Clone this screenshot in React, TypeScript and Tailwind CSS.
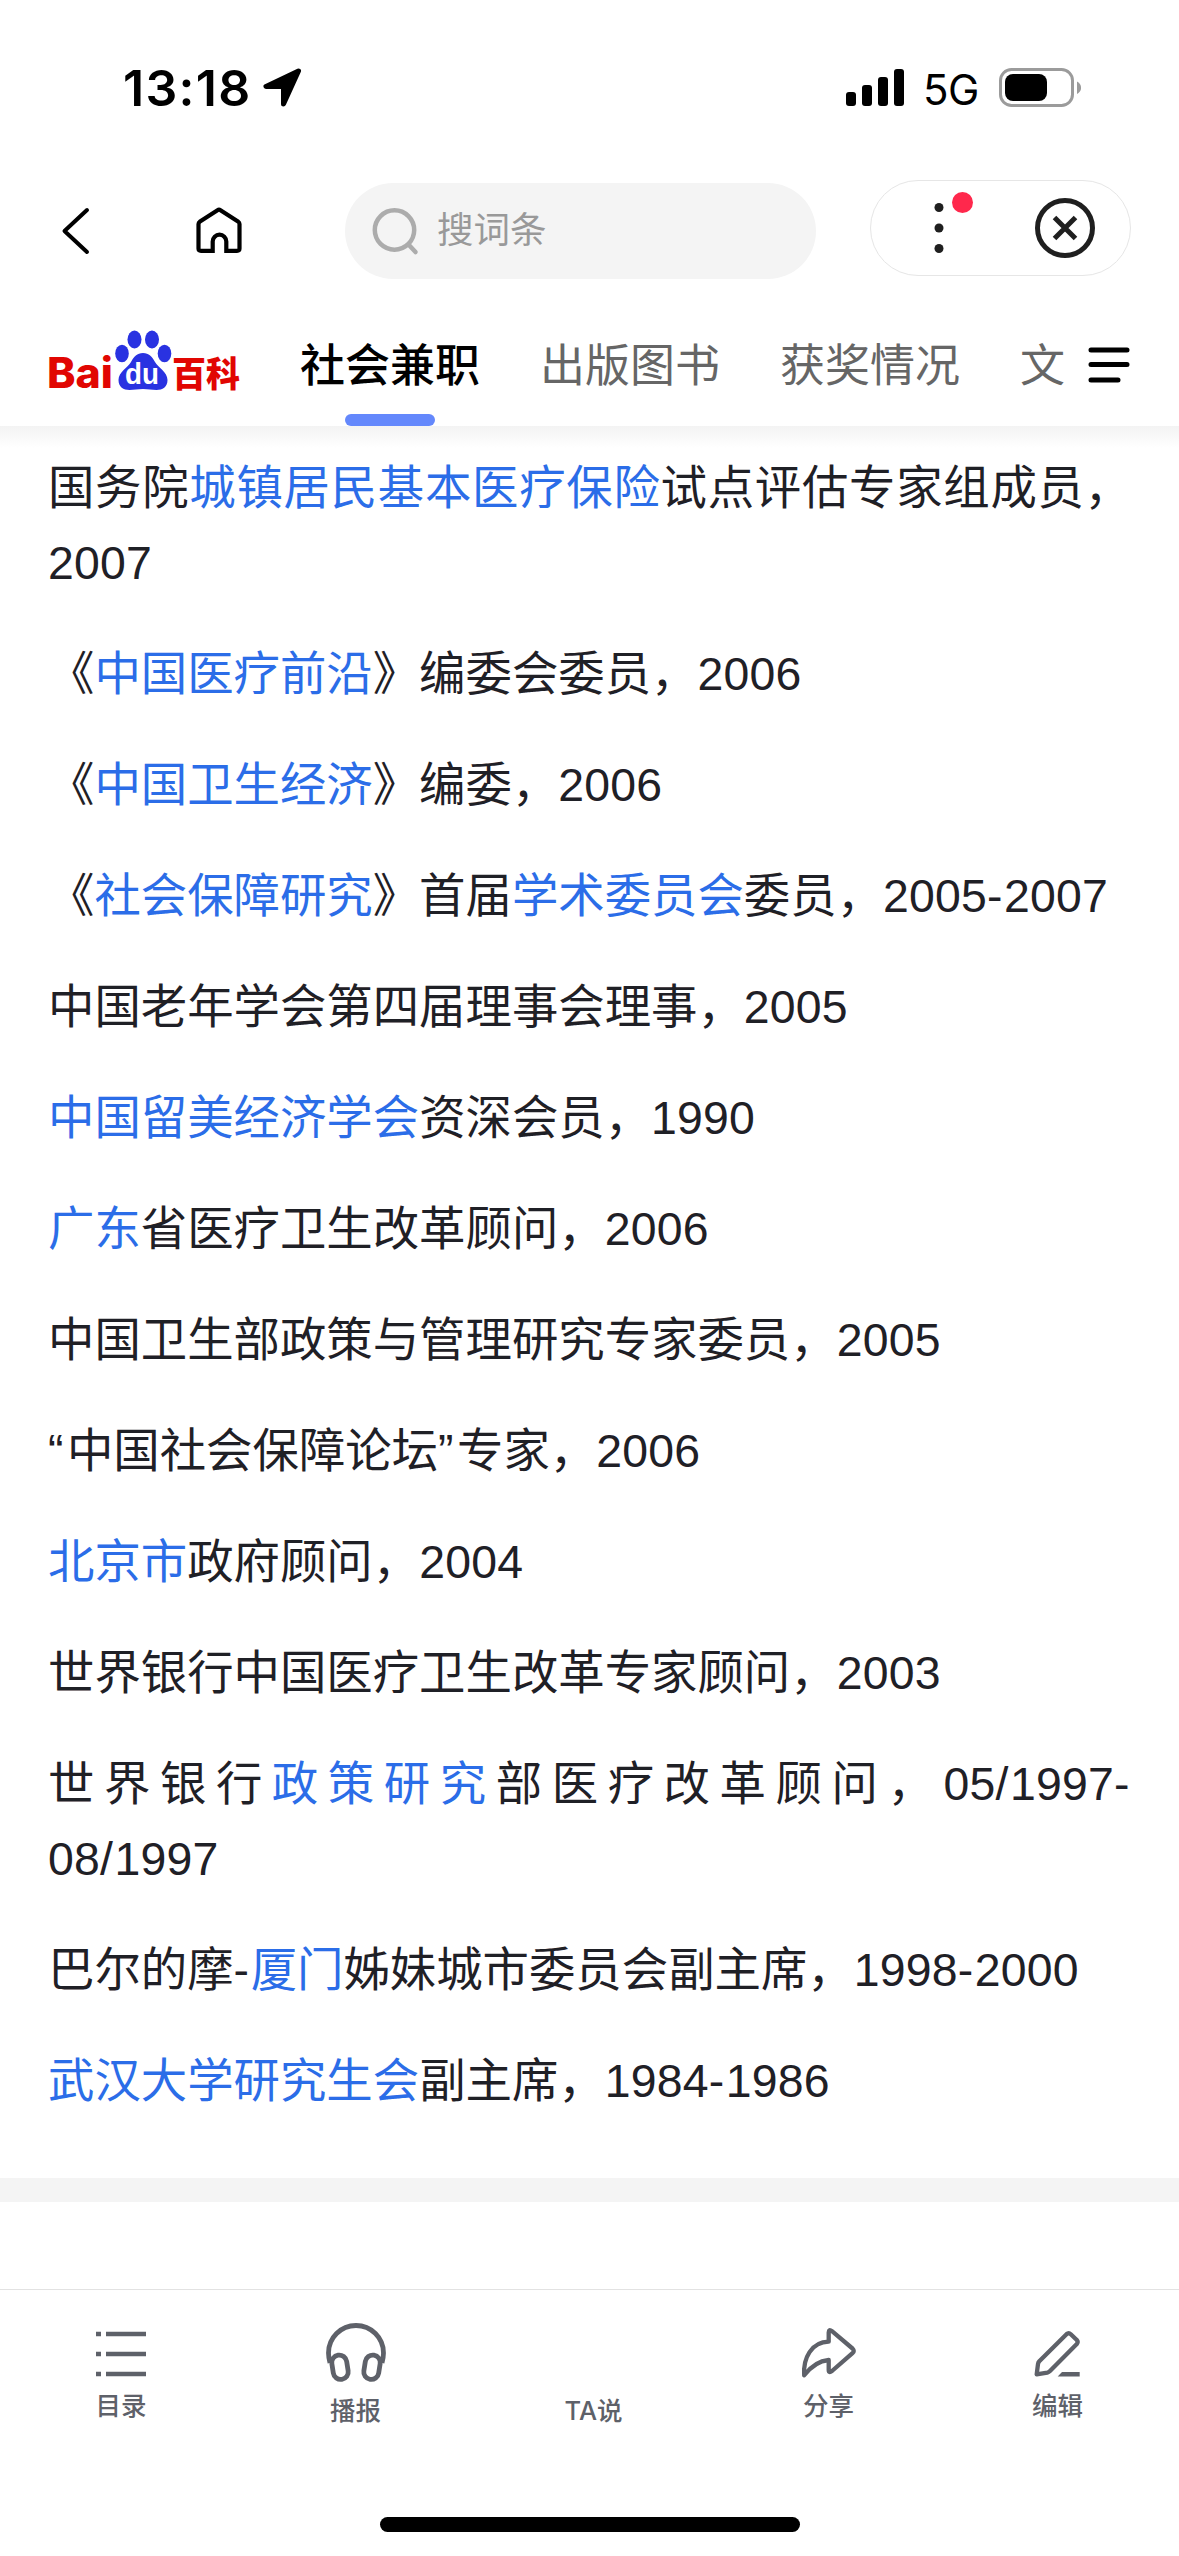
import type { ReactNode } from "react";

type Part = string | { link: string };

const entries: Part[][] = [
  ["国务院", { link: "城镇居民基本医疗保险" }, "试点评估专家组成员，2007"],
  ["《", { link: "中国医疗前沿" }, "》编委会委员，2006"],
  ["《", { link: "中国卫生经济" }, "》编委，2006"],
  ["《", { link: "社会保障研究" }, "》首届", { link: "学术委员会" }, "委员，2005-2007"],
  ["中国老年学会第四届理事会理事，2005"],
  [{ link: "中国留美经济学会" }, "资深会员，1990"],
  [{ link: "广东" }, "省医疗卫生改革顾问，2006"],
  ["中国卫生部政策与管理研究专家委员，2005"],
  ["“中国社会保障论坛”专家，2006"],
  [{ link: "北京市" }, "政府顾问，2004"],
  ["世界银行中国医疗卫生改革专家顾问，2003"],
  ["世界银行", { link: "政策研究" }, "部医疗改革顾问，05/1997-08/1997"],
  ["巴尔的摩-", { link: "厦门" }, "姊妹城市委员会副主席，1998-2000"],
  [{ link: "武汉大学研究生会" }, "副主席，1984-1986"],
];

const tabs = ["社会兼职", "出版图书", "获奖情况", "文"];

function StatusBar() {
  return (
    <div className="flex h-[180px] items-start justify-between pl-[123px] pr-[98px] pt-[64px]">
      <div className="flex h-12 items-center gap-[10px]">
        <span className="font-['Inter',sans-serif] text-[50px] font-semibold leading-none tracking-[1.3px]">
          13:18
        </span>
        <svg width="42" height="42" viewBox="0 0 42 42">
          <path
            d="M36.500 4 4 19.500H21.500V37z"
            fill="#000"
            stroke="#000"
            strokeWidth="5"
            strokeLinejoin="round"
          />
        </svg>
      </div>
      <div className="flex h-12 items-center">
        <svg width="58" height="38" viewBox="0 0 58 38">
          <rect x="0" y="23" width="10" height="14" rx="3" />
          <rect x="16" y="16" width="10" height="21" rx="3" />
          <rect x="32" y="8" width="10" height="29" rx="3" />
          <rect x="48" y="0" width="10" height="37" rx="3" />
        </svg>
        <span className="ml-[19px] w-[76px] whitespace-nowrap pt-[3px] font-['Inter',sans-serif] text-[42px] leading-none tracking-[-0.5px]">
          5G
        </span>
        <svg width="82" height="40" viewBox="0 0 82 40">
          <rect x="1.5" y="1.5" width="72" height="36" rx="11" fill="none" stroke="#9b9b9b" strokeWidth="3" />
          <rect x="6" y="6" width="42" height="27" rx="8" />
          <path d="M78 13.500c5.500 3 5.500 9.500 0 12.500z" fill="#9b9b9b" />
        </svg>
      </div>
    </div>
  );
}

function NavBar() {
  return (
    <div className="flex h-[102px] items-start pl-[60px]">
      <svg className="mt-[26px]" width="32" height="50" viewBox="0 0 32 50" fill="none" stroke="#000" strokeWidth="4">
        <path d="M27 4 4.500 25 27 46" strokeLinecap="round" strokeLinejoin="round" />
      </svg>
      <svg
        className="ml-[102px] mt-[25px]"
        width="50"
        height="50"
        viewBox="0 0 50 50"
        fill="none"
        stroke="#000"
        strokeWidth="4.200"
      >
        <path
          d="M18.700 45.800H7Q4.500 45.800 4.500 43.500V19Q4.500 17.500 6 16.500L23.500 5.200Q25 4.200 26.500 5.200L44 16.500Q45.500 17.500 45.500 19V43.500Q45.500 45.800 43 45.800H32.300V36.500a6.800 6.800 0 0 0-13.600 0z"
          strokeLinejoin="miter"
        />
      </svg>
      <div className="ml-[101px] mt-[3px] flex h-24 w-[471px] items-center rounded-full bg-[#f4f4f4] pl-[26px]">
        <svg width="50" height="50" viewBox="0 0 50 50" fill="none" stroke="#acacac" strokeWidth="4.500">
          <circle cx="23.500" cy="24" r="19.700" />
          <path d="M37.500 38.500 44.500 46" strokeLinecap="round" />
        </svg>
        <span className="ml-4 pt-px text-[36.500px] leading-none text-[#999]">搜词条</span>
      </div>
      <div className="relative ml-[54px] flex h-24 w-[261px] items-center rounded-full border border-[#e6e6e6]">
        <svg className="ml-[58px]" width="20" height="50" viewBox="0 0 20 50" fill="#1f1f1f">
          <circle cx="10" cy="4.500" r="4.500" />
          <circle cx="10" cy="25" r="4.500" />
          <circle cx="10" cy="45.500" r="4.500" />
        </svg>
        <span className="absolute left-[81px] top-[11px] h-[21px] w-[21px] rounded-full bg-[#ff284c]" />
        <svg
          className="ml-[86px]"
          width="60"
          height="60"
          viewBox="0 0 60 60"
          fill="none"
          stroke="#1f1f1f"
          strokeWidth="5"
        >
          <circle cx="30" cy="30" r="27.500" />
          <path d="m19.500 19.500 21 21M40.500 19.500l-21 21" />
        </svg>
      </div>
    </div>
  );
}

function Logo() {
  return (
    <svg width="194" height="66" viewBox="0 0 194 66" className="overflow-visible">
      <g fill="#e10602" fontWeight="900">
        <text
          x="-1"
          y="59.500"
          fontSize="42"
          fontFamily="Inter, sans-serif"
          fontWeight="800"
          textLength="66"
          lengthAdjust="spacingAndGlyphs"
        >
          Bai
        </text>
        <text
          x="124"
          y="58.500"
          fontSize="35"
          fontFamily="'Noto Sans CJK SC', sans-serif"
          textLength="68"
          lengthAdjust="spacingAndGlyphs"
        >
          百科
        </text>
      </g>
      <g fill="#2932e1">
        <ellipse cx="74" cy="25.500" rx="6.800" ry="8.700" />
        <ellipse cx="86.500" cy="11.500" rx="7" ry="9" />
        <ellipse cx="104" cy="11.500" rx="7" ry="9" />
        <ellipse cx="116.500" cy="25.500" rx="6.800" ry="8.700" />
        <path d="M95 25c6 0 9 3.500 12 9s12.500 10 12.500 18c0 7-5 10-11 10-5 0-8-1-13.500-1s-8.500 1-13.500 1c-6 0-11-3-11-10 0-8 9.500-12.500 12.500-18s6-9 12-9z" />
      </g>
      <text
        x="77"
        y="56"
        fontSize="29"
        fill="#fff"
        fontFamily="'Liberation Sans', sans-serif"
        fontWeight="700"
        textLength="34"
        lengthAdjust="spacingAndGlyphs"
      >
        du
      </text>
    </svg>
  );
}

function TabBar() {
  return (
    <div className="flex h-[144px] items-start pl-12">
      <div className="mt-[46px] w-[252px]">
        <Logo />
      </div>
      <div className="flex h-full w-[766px] gap-[60px]">
        {tabs.map((tab, i) => (
          <div key={tab} className="flex h-full shrink-0 flex-col items-center justify-between pt-[54px]">
            <span
              className={
                i === 0
                  ? "whitespace-nowrap text-[45px] font-medium leading-[62px] text-black"
                  : "whitespace-nowrap text-[45px] leading-[62px] text-[#666]"
              }
            >
              {tab}
            </span>
            {i === 0 && <span className="h-3 w-[90px] rounded-full bg-[#6488fc]" />}
          </div>
        ))}
      </div>
      <svg
        className="ml-[21px] mt-[62px]"
        width="44"
        height="42"
        viewBox="0 0 44 42"
        stroke="#000"
        strokeWidth="5"
        strokeLinecap="round"
      >
        <path d="M4 6h36M4 20.500h36M4 36h27" />
      </svg>
    </div>
  );
}

// Latin runs and curly quotes are set a little looser than the Chinese text
function spaced(text: string) {
  return text.split(/(\d+|[-/]|[“”])/).map((run, i) => {
    if (/^[“”]$/.test(run)) {
      return (
        <span key={i} className="tracking-[3.5px]">
          {run}
        </span>
      );
    }
    if (/^[-/]$/.test(run)) {
      return (
        <span key={i} className="tracking-[1.6px]">
          {run}
        </span>
      );
    }
    if (/^\d+$/.test(run)) {
      return (
        <span key={i} className="tracking-[0.2px]">
          {run}
        </span>
      );
    }
    return run;
  });
}

function Entry({ parts }: { parts: Part[] }) {
  return (
    <p className="text-justify text-[46.4px] leading-[75px] text-[#1f2026]">
      {parts.map((part, i) =>
        typeof part === "string" ? (
          <span key={i}>{spaced(part)}</span>
        ) : (
          <a key={i} href="#" className="text-[#2b6de8]">
            {part.link}
          </a>
        )
      )}
    </p>
  );
}

function ToolItem({ label, className, children }: { label: string; className: string; children?: ReactNode }) {
  return (
    <div className={`flex flex-col items-center ${className}`}>
      <div className="flex h-[64px] items-center justify-center">{children}</div>
      <span className="mt-[7px] whitespace-nowrap font-['Inter','Noto_Sans_CJK_SC',sans-serif] text-[25.5px] font-medium leading-[34px]">
        {label}
      </span>
    </div>
  );
}

function ToolBar() {
  return (
    <div className="flex h-[267px] flex-col items-center justify-between border-t border-[#e2e2e2] text-[#5e6169]">
      <div className="flex w-full items-start pt-[28px]">
        <ToolItem label="目录" className="w-[242px]">
          <svg className="mt-2" width="50" height="50" viewBox="0 0 50 50" stroke="currentColor" strokeWidth="4.500">
            <path d="M0 5h5M10 5h40M0 25h5M10 25h40M0 45h5M10 45h40" />
          </svg>
        </ToolItem>
        <ToolItem label="播报" className="w-[227px] pt-[5px]">
          <svg
            className="mb-1"
            width="60"
            height="60"
            viewBox="0 0 60 60"
            fill="none"
            stroke="currentColor"
            strokeWidth="4.800"
          >
            <path d="M4 40C3 36 2.500 33 2.500 30a27.500 27.500 0 0 1 55 0c0 3-.5 6-1.500 10" />
            <rect x="6.500" y="32" width="15" height="24.500" rx="7.500" transform="rotate(-9 14 44.300)" />
            <rect x="38.500" y="32" width="15" height="24.500" rx="7.500" transform="rotate(9 46 44.300)" />
          </svg>
        </ToolItem>
        <ToolItem label="TA说" className="w-[249px] pt-[5px]" />
        <ToolItem label="分享" className="w-[221px]">
          <svg
            width="56"
            height="60"
            viewBox="0 0 56 60"
            fill="none"
            stroke="currentColor"
            strokeWidth="4.300"
            strokeLinejoin="round"
          >
            <path d="M27.700 21.700V12.500Q27.700 8.500 31 11.200L51.500 28.500Q54 31 51.500 33.200L31 51Q27.700 53.500 27.700 50V40C17 41 9.500 47 3.200 55.300C2 38 10.500 22 27.700 21.700z" />
          </svg>
        </ToolItem>
        <ToolItem label="编辑" className="w-[237px]">
          <svg
            width="50"
            height="54"
            viewBox="0 0 50 54"
            fill="none"
            stroke="currentColor"
            strokeWidth="4.300"
            strokeLinejoin="round"
          >
            <path d="M3.700 51.300 5 41Q5.200 39.500 6.300 38.300L33.500 11.200Q35.700 9.200 37.800 11.200L43.800 17Q45.500 19 43.800 21L17 48Q15.800 49.200 14.300 49.600z" />
            <path d="M24.700 53.500 29 49H46.700V53.500z" fill="currentColor" stroke="none" />
          </svg>
        </ToolItem>
      </div>
      <div className="mb-6 h-[15px] w-[420px] rounded-full bg-black" />
    </div>
  );
}

export default function App() {
  return (
    <div className="flex h-[2556px] w-[1179px] flex-col overflow-hidden bg-white font-['Liberation_Sans','Noto_Sans_CJK_SC',sans-serif] text-black">
      <StatusBar />
      <NavBar />
      <TabBar />
      <div className="h-[22px] bg-linear-to-b from-[#f3f3f3] to-white" />
      <main className="flex h-[1730px] flex-col gap-9 px-12 pt-[3px]">
        {entries.map((parts, i) => (
          <Entry key={i} parts={parts} />
        ))}
      </main>
      <div className="h-6 bg-[#f4f4f4]" />
      <div className="h-[87px]" />
      <ToolBar />
    </div>
  );
}
